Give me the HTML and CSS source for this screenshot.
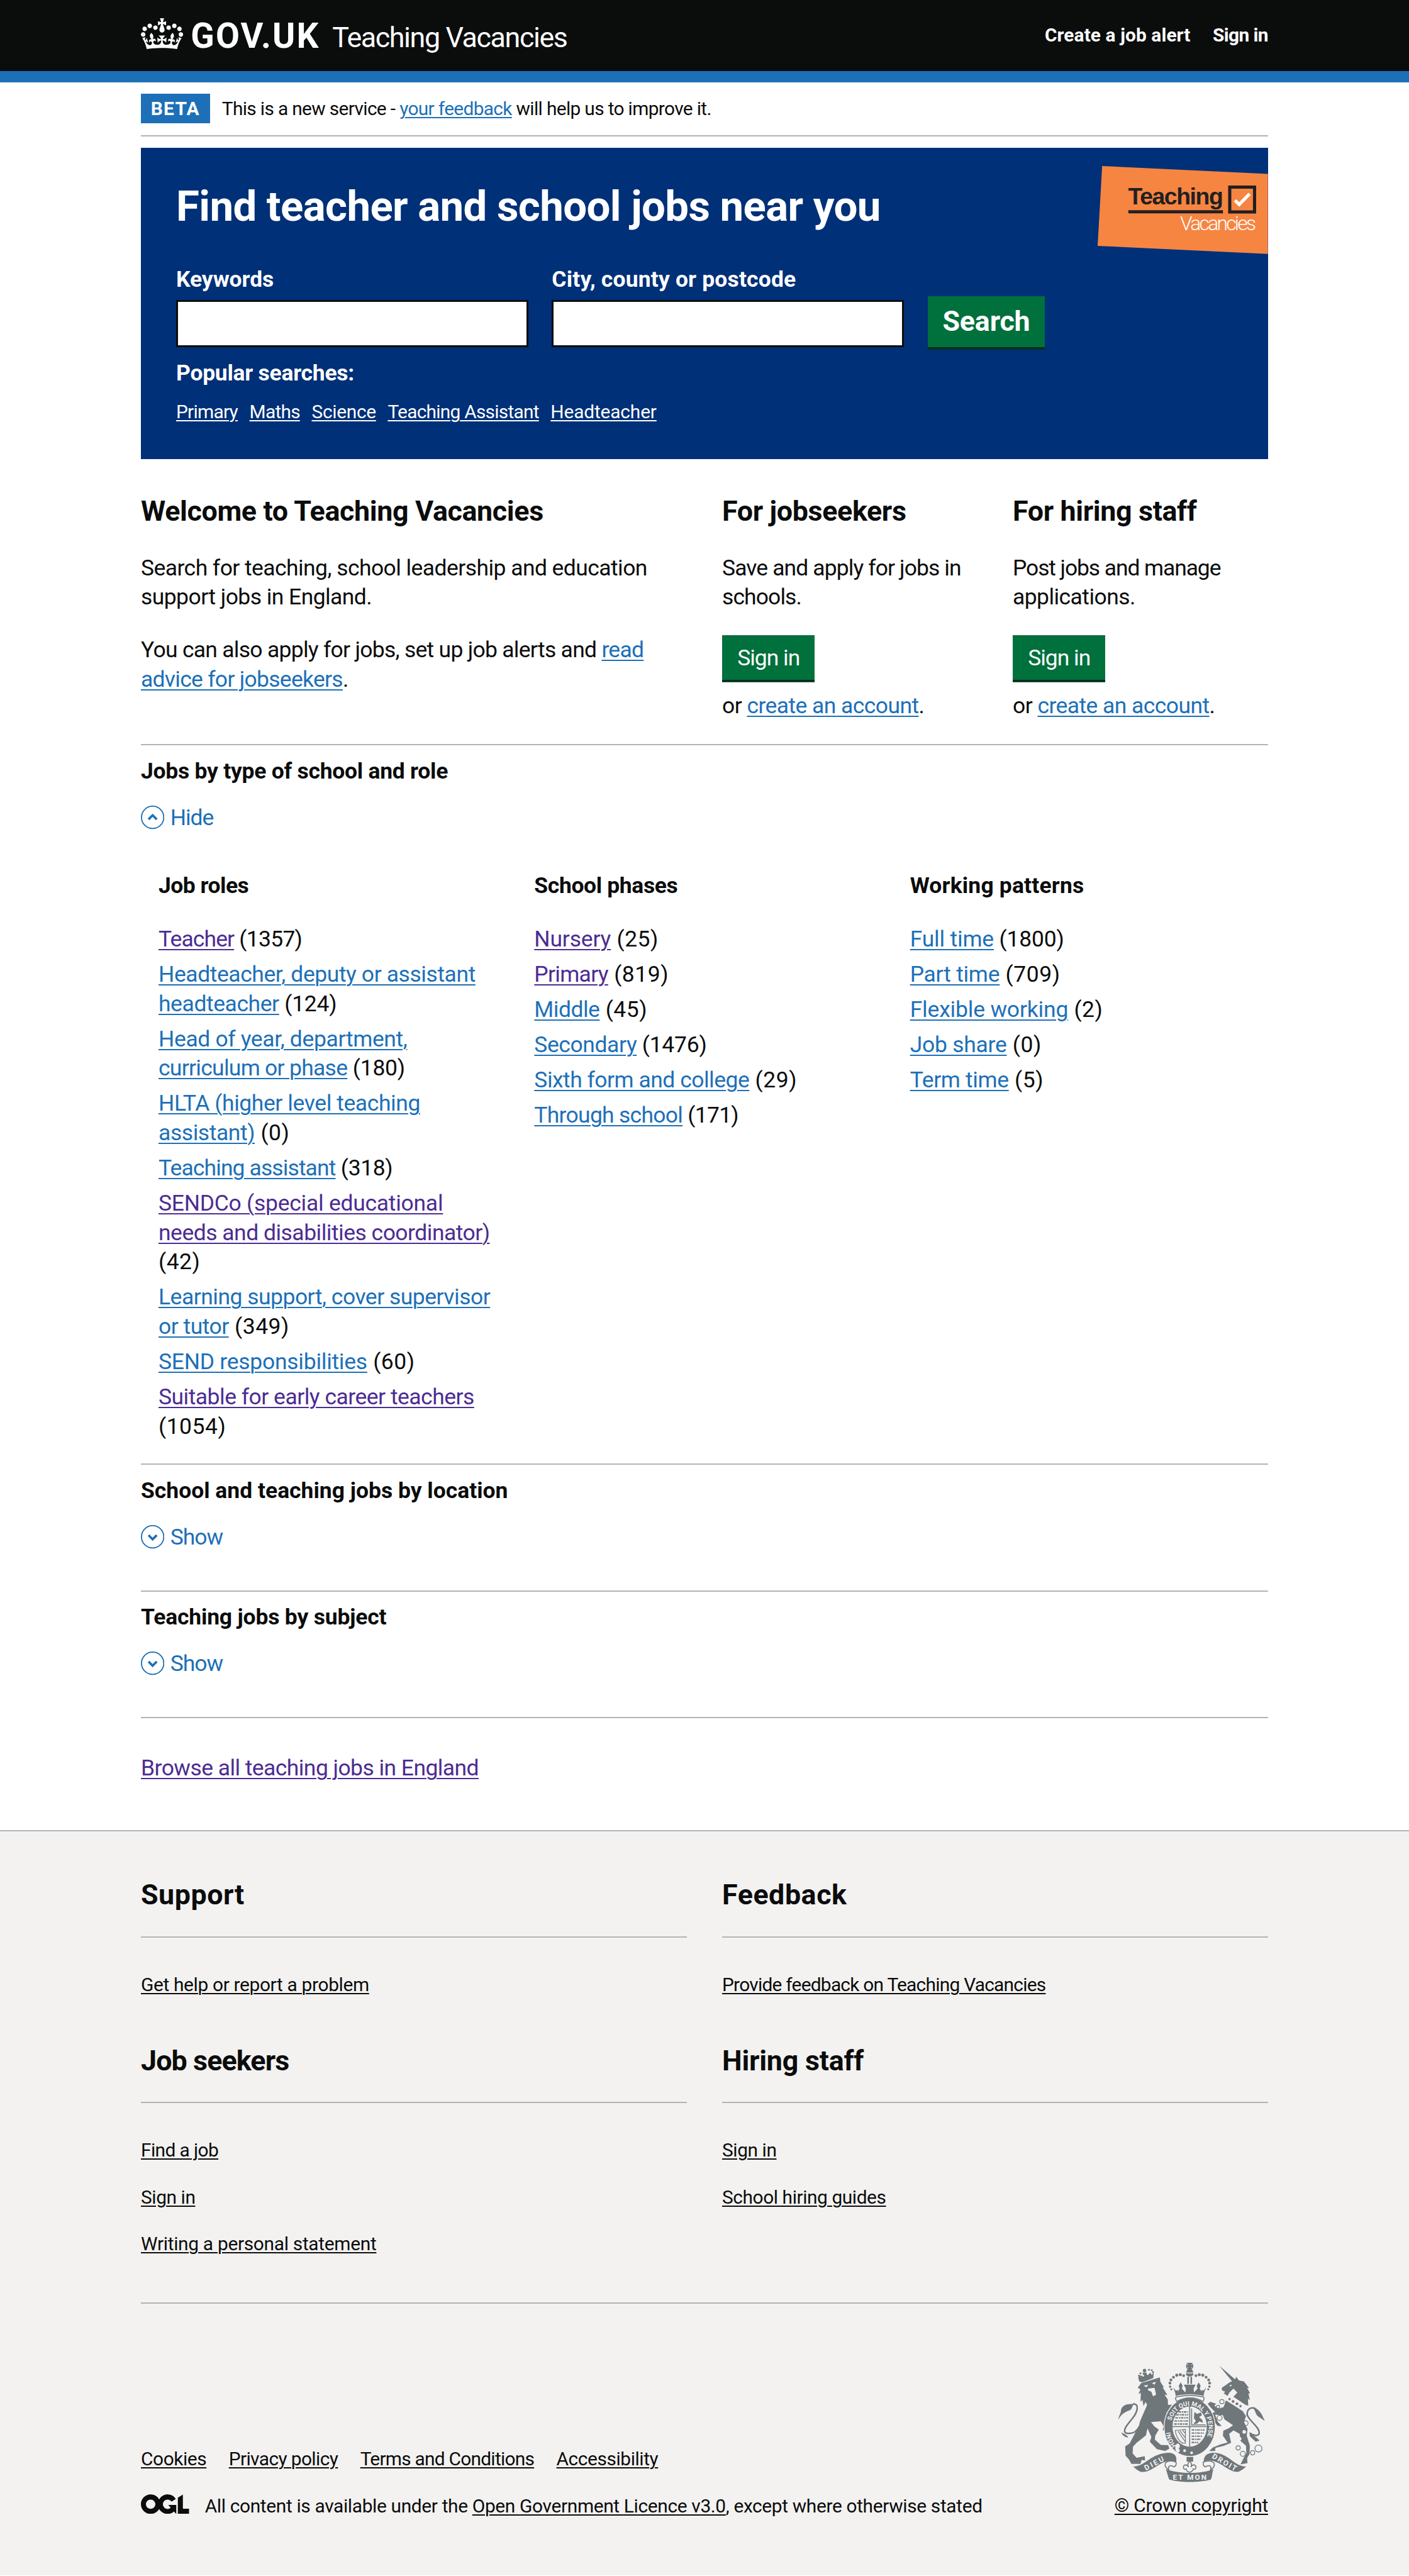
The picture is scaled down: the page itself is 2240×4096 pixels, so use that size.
FILE: index.html
```html
<!DOCTYPE html>
<html lang="en">
<head>
<meta charset="utf-8">
<title>Teaching Vacancies - GOV.UK</title>
<link rel="stylesheet" href="styles.css">
</head>
<body>
<header class="header">
  <div class="container header-row">
    <a class="logo" href="#">
      <svg class="crown" viewBox="0 0 132 97" aria-hidden="true"><path fill="currentColor" fill-rule="evenodd" d="M25 30.2c3.5 1.5 7.7-.2 9.1-3.7 1.5-3.6-.2-7.8-3.9-9.2-3.6-1.4-7.6.3-9.1 3.9-1.4 3.5.3 7.5 3.9 9zM9 39.5c3.6 1.5 7.8-.2 9.2-3.7 1.5-3.6-.2-7.8-3.9-9.1-3.6-1.5-7.6.2-9.1 3.8-1.4 3.5.3 7.5 3.8 9zM4.4 57.2c3.5 1.5 7.7-.2 9.1-3.8 1.5-3.6-.2-7.7-3.9-9.1-3.5-1.5-7.6.3-9.1 3.8-1.4 3.5.3 7.6 3.9 9.1zm38.3-21.4c3.5 1.5 7.7-.2 9.1-3.8 1.5-3.6-.2-7.7-3.9-9.1-3.6-1.5-7.6.3-9.1 3.8-1.3 3.6.4 7.7 3.9 9.1zm64.4-5.6c-3.6 1.5-7.8-.2-9.1-3.7-1.5-3.6.2-7.8 3.8-9.2 3.6-1.4 7.7.3 9.2 3.9 1.3 3.5-.4 7.5-3.9 9zm15.9 9.3c-3.6 1.5-7.7-.2-9.1-3.7-1.5-3.6.2-7.8 3.7-9.1 3.6-1.5 7.7.2 9.2 3.8 1.5 3.5-.3 7.5-3.8 9zm4.7 17.7c-3.6 1.5-7.8-.2-9.2-3.8-1.5-3.6.2-7.7 3.9-9.1 3.6-1.5 7.7.3 9.2 3.8 1.3 3.5-.4 7.6-3.9 9.1zM89.3 35.8c-3.6 1.5-7.8-.2-9.2-3.8-1.4-3.6.2-7.7 3.9-9.1 3.6-1.5 7.7.3 9.2 3.8 1.4 3.6-.3 7.7-3.9 9.1zM69.7 17.7l8.9 4.7V9.3l-8.9 2.8c-.2-.3-.5-.6-.9-.9L72.4 0H59.6l3.5 11.2c-.3.3-.6.5-.9.9l-8.8-2.8v13.1l8.8-4.7c.3.3.6.7.9.9l-5 15.4v.1c-.2.8-.4 1.6-.4 2.4 0 4.1 3.1 7.5 7 8.1h.2c.3 0 .7.1 1 .1.4 0 .7 0 1-.1h.2c4-.6 7.1-4.1 7.1-8.1 0-.8-.1-1.7-.4-2.4V34l-5.1-15.4c.4-.2.7-.6 1-.9zM66 92.8c16.9 0 32.8 1.1 47.1 3.2 4-16.9 8.9-26.7 14-33.5l-9.6-3.4c1 4.9 1.1 7.2 0 10.2-1.5-1.4-3-4.3-4.2-8.7L108.6 76c2.8-2 5-3.2 7.5-3.3-4.4 9.4-10 11.9-13.6 11.2-4.3-.8-6.3-4.6-5.6-7.9 1-4.7 5.7-5.9 8-.5 4.3-8.7-3-11.4-7.6-8.8 7.1-7.2 7.9-13.5 2.1-21.1-8 6.1-8.1 12.3-4.5 20.8-4.7-5.4-12.1-2.5-9.5 6.2 3.4-5.2 7.9-2 7.2 3.1-.6 4.3-6.4 7.8-13.5 7.2-10.3-.9-10.9-8-11.2-13.8 2.5-.5 7.1 1.8 11 7.3L80.2 60c-4.1 4.4-8 5.3-12.3 5.4 1.4-4.4 8-11.6 8-11.6H55.5s6.4 7.2 7.9 11.6c-4.2-.1-8-1-12.3-5.4l1.4 16.4c3.9-5.5 8.5-7.7 10.9-7.3-.3 5.8-.9 12.8-11.1 13.8-7.2.6-12.9-2.9-13.5-7.2-.7-5 3.8-8.3 7.1-3.1 2.7-8.7-4.6-11.6-9.4-6.2 3.7-8.5 3.6-14.7-4.6-20.8-5.8 7.6-5 13.9 2.2 21.1-4.7-2.6-11.9.1-7.7 8.8 2.3-5.5 7.1-4.2 8.1.5.7 3.3-1.3 7.1-5.7 7.9-3.5.7-9-1.8-13.5-11.2 2.5.1 4.7 1.3 7.5 3.3l-4.7-15.4c-1.2 4.4-2.7 7.2-4.3 8.7-1.1-3-.9-5.3 0-10.2l-9.5 3.4c5 6.9 9.9 16.7 14 33.5 14.8-2.1 30.8-3.2 47.7-3.2z"/></svg>
      <span class="logotype">GOV.UK</span>
      <span class="product">Teaching Vacancies</span>
    </a>
    <nav class="header-nav"><a href="#">Create a job alert</a><a class="k20" href="#">Sign in</a></nav>
  </div>
</header>

<div class="container">
  <div class="phase">
    <strong class="tag">BETA</strong>
    <span class="phase-text">This is a new service - <a class="link" href="#">your feedback</a> will help us to improve it.</span>
  </div>

  <main>
    <section class="hero">
      <h1>Find teacher and school jobs near you</h1>
      <svg class="hero-logo" viewBox="1870 283 290 150">
        <path fill="#f68542" d="M1877.7 283 2160 296.3V432.7L1870 419Z"/>
        <text class="mark-teaching" x="1922" y="348.7" textLength="162">Teaching</text>
        <path fill="#231f20" d="M1922.3 358.3h161.2v5.3h-161.2z"/>
        <path fill="none" stroke="#231f20" stroke-width="5.4" d="M2095 319h42.3v42.3H2095z"/>
        <path fill="none" stroke="#fff" stroke-width="5.4" d="m2104 341.5 7.2 7 17.6-18"/>
        <text class="mark-vacancies" x="2010.5" y="392.7" textLength="129.5">Vacancies</text>
      </svg>
      <form class="search">
        <div class="field"><label for="kw">Keywords</label><input id="kw" type="text"></div>
        <div class="field"><label class="wide" for="loc">City, county or postcode</label><input id="loc" type="text"></div>
        <button class="search-btn" type="button">Search</button>
      </form>
      <p class="popular">Popular searches:</p>
      <nav class="popular-links"><a class="k25" href="#">Primary</a><a class="k25" href="#">Maths</a><a class="k10" href="#">Science</a><a class="k25" href="#">Teaching Assistant</a><a class="k5" href="#">Headteacher</a></nav>
    </section>

    <section class="intro">
      <div>
        <h2>Welcome to Teaching Vacancies</h2>
        <p>Search for teaching, school leadership and education<br>support jobs in England.</p>
        <p class="k20">You can also apply for jobs, set up job alerts and <a class="link" href="#">read<br>advice for jobseekers</a>.</p>
      </div>
      <div>
        <h2>For jobseekers</h2>
        <p class="k25">Save and apply for jobs in<br>schools.</p>
        <a class="btn" href="#">Sign in</a>
        <p class="or">or <a class="link" href="#">create an account</a>.</p>
      </div>
      <div>
        <h2>For hiring staff</h2>
        <p><span class="k30">Post jobs and manage</span><br>applications.</p>
        <a class="btn" href="#">Sign in</a>
        <p class="or">or <a class="link" href="#">create an account</a>.</p>
      </div>
    </section>

    <section class="acc">
      <h3 class="k7">Jobs by type of school and role</h3>
      <button class="toggle" type="button"><svg class="chev" viewBox="0 0 20 20"><circle cx="10" cy="10" r="9.5"/><path d="m6.5 11.7 3.5-3.5 3.5 3.5"/></svg>Hide</button>
      <div class="facets">
        <div>
          <h4 class="k15">Job roles</h4>
          <ul>
            <li class="k20"><a class="link visited k25" href="#">Teacher</a> (1357)</li>
            <li class="k7"><a class="link k12" href="#">Headteacher, deputy or assistant<br>headteacher</a> (124)</li>
            <li class="k7"><a class="link k20" href="#"><span class="k10">Head of year, department,</span><br>curriculum or phase</a> (180)</li>
            <li><a class="link k12" href="#">HLTA (higher level teaching<br>assistant)</a> (0)</li>
            <li class="k10"><a class="link k25" href="#">Teaching assistant</a> (318)</li>
            <li><a class="link visited" href="#"><span class="k7">SENDCo (special educational</span><br><span class="k15">needs and disabilities coordinator)</span></a><br>(42)</li>
            <li><a class="link k15" href="#">Learning support, cover supervisor<br>or tutor</a> (349)</li>
            <li><a class="link k7" href="#">SEND responsibilities</a> (60)</li>
            <li><a class="link visited k15" href="#">Suitable for early career teachers</a><br>(1054)</li>
          </ul>
        </div>
        <div>
          <h4 class="k10">School phases</h4>
          <ul>
            <li><a class="link visited k5" href="#">Nursery</a> (25)</li>
            <li><a class="link visited k20" href="#">Primary</a> (819)</li>
            <li><a class="link k15" href="#">Middle</a> (45)</li>
            <li class="k7"><a class="link k12" href="#">Secondary</a> (1476)</li>
            <li><a class="link k15" href="#">Sixth form and college</a> (29)</li>
            <li class="k20"><a class="link k20" href="#">Through school</a> (171)</li>
          </ul>
        </div>
        <div>
          <h4 class="wide">Working patterns</h4>
          <ul>
            <li class="k5"><a class="link k5" href="#">Full time</a> (1800)</li>
            <li><a class="link k7" href="#">Part time</a> (709)</li>
            <li><a class="link k5" href="#">Flexible working</a> (2)</li>
            <li><a class="link k7" href="#">Job share</a> (0)</li>
            <li><a class="link k10" href="#">Term time</a> (5)</li>
          </ul>
        </div>
      </div>
    </section>
    <section class="acc closed">
      <h3>School and teaching jobs by location</h3>
      <button class="toggle" type="button"><svg class="chev" viewBox="0 0 20 20"><circle cx="10" cy="10" r="9.5"/><path d="m6.5 8.6 3.5 3.5 3.5-3.5"/></svg>Show</button>
    </section>
    <section class="acc closed last">
      <h3 class="k5">Teaching jobs by subject</h3>
      <button class="toggle" type="button"><svg class="chev" viewBox="0 0 20 20"><circle cx="10" cy="10" r="9.5"/><path d="m6.5 8.6 3.5 3.5 3.5-3.5"/></svg>Show</button>
    </section>
    <p class="browse"><a class="link visited" href="#">Browse all teaching jobs in England</a></p>
  </main>
</div>

<footer class="footer">
  <div class="container">
    <div class="footer-nav">
      <div><h2 class="wider">Support</h2><ul><li class="k12"><a href="#">Get help or report a problem</a></li></ul></div>
      <div><h2 class="wider">Feedback</h2><ul><li class="k25"><a href="#">Provide feedback on Teaching Vacancies</a></li></ul></div>
      <div><h2 class="k20">Job seekers</h2><ul><li class="k20"><a href="#">Find a job</a></li><li class="k15"><a href="#">Sign in</a></li><li class="k10"><a href="#">Writing a personal statement</a></li></ul></div>
      <div><h2 class="k5">Hiring staff</h2><ul><li class="k15"><a href="#">Sign in</a></li><li class="k15"><a href="#">School hiring guides</a></li></ul></div>
    </div>
    <div class="footer-meta">
      <div class="meta-left">
        <nav class="meta-links"><a class="k15" href="#">Cookies</a><a class="k20" href="#">Privacy policy</a><a class="k25" href="#">Terms and Conditions</a><a class="k15" href="#">Accessibility</a></nav>
        <div class="licence">
          <svg class="ogl" viewBox="0 0 483.2 195.7" aria-hidden="true"><path fill="currentColor" d="M421.5 142.8V.1l-50.7 32.3v161.1h112.4v-50.7zm-122.3-9.6A47.12 47.12 0 0 1 221 97.8c0-26 21.1-47.1 47.1-47.1 16.7 0 31.4 8.7 39.7 21.8l42.7-27.2A97.63 97.63 0 0 0 268.1 0c-36.5 0-68.3 20.1-85.1 49.7A98 98 0 0 0 97.8 0C43.9 0 0 43.9 0 97.8s43.9 97.8 97.8 97.8c36.5 0 68.3-20.1 85.1-49.7a97.76 97.76 0 0 0 149.6 25.4l19.4 22.2h3v-87.8h-80l24.3 27.5zM97.8 145c-26 0-47.1-21.1-47.1-47.1s21.1-47.1 47.1-47.1 47.1 21.1 47.1 47.1S123.8 145 97.8 145"/></svg>
          <span class="licence-text">All content is available under the <a href="#">Open Government Licence v3.0</a>, except where otherwise stated</span>
        </div>
      </div>
      <div class="copyright">
        <svg class="crest" viewBox="130 133 754 616">
          <defs>
            <path id="arc-main" d="M404 433A98 114 0 1 1 545 569"/>
            <path id="arc-honi" d="M429 560A98 118 0 0 1 398 480"/>
          </defs>
          <g fill="#6f777b" stroke="none">
            <!-- lion -->
            <path d="M250 240 345 211 348 234 366 262 360 262 384 302 369 299 386 324 387 352 407 350 378 396 404 440 409 490 400 480 392 494 384 480 360 482 364 460 350 436 300 440 318 462 340 478 322 508 320 530 350 556 388 558 394 576 372 588 330 578 294 540 302 516 282 472 274 508 226 546 208 566 206 600 226 622 268 614 270 636 252 634 246 654 200 654 186 630 170 612 168 564 190 550 210 512 238 460 244 436 280 352 272 336 262 358 256 326 246 336 248 290 236 296 246 272 232 264Z"/>
            <path d="M234 212 240 232 256 236 312 214 314 184 304 198 296 186 284 200 268 190 262 208 246 200Z"/>
            <path d="M133 428C134 408 148 392 146 380 148 364 166 348 188 348L214 346C202 356 206 372 190 380 168 386 144 402 133 428ZM148 492C160 500 176 504 184 518 170 520 152 508 148 492Z"/>
            <!-- unicorn -->
            <path d="M648 150 732 222 716 232ZM730 222 736 208 750 226 776 232 802 266 792 264 807 292 799 294 806 328 796 320 798 356 784 352 722 310 742 288 722 268 700 290 692 306 672 292 680 284 664 278 662 264 684 250 700 238Z"/>
            <path d="M684 328 770 384 786 410 776 440 794 476 790 510 806 560 804 604 792 624 794 650 758 656 776 620 788 600 786 560 758 536 754 500 722 482 700 500 710 546 670 562 630 572 628 588 598 588 616 570 656 554 692 544 668 510 670 484 700 470 720 456 676 426 668 404 628 402 642 438 662 460 642 460 614 428 604 396 628 388 606 366 590 346 604 336 634 346 624 354 644 372 672 362Z"/>
            <path d="M822 362C856 374 868 398 882 434 862 416 840 412 836 392ZM804 490 856 534 836 540 806 512Z"/>
          </g>
          <g fill="none" stroke="#6f777b" stroke-width="8">
            <path d="M240 462C226 492 200 502 172 496 150 484 184 446 204 422 232 388 242 346 208 346M792 408C790 374 806 362 834 370M792 400C796 430 854 462 854 494 852 516 822 508 806 496"/>
            <g stroke-width="4"><circle cx="663" cy="335" r="11"/><circle cx="651" cy="418" r="13"/><circle cx="785" cy="445" r="12"/><circle cx="746" cy="572" r="11"/><circle cx="770" cy="602" r="13"/><circle cx="820" cy="597" r="11"/><circle cx="850" cy="575" r="18"/><circle cx="643" cy="362" r="8"/></g>
          </g>
          <g fill="#f3f2f1">
            <circle cx="777" cy="490" r="9"/><circle cx="754" cy="525" r="9"/>
            <path d="M262 252 286 250 276 262ZM304 240 326 234 318 248ZM286 268 318 264 326 300 310 308 302 284 284 276ZM700 252l16-4-8 10ZM690 310l90 54-10 16-88-52Z"/>
          </g>
          <g fill="#6f777b"><circle cx="267" cy="176" r="9"/><path d="M258 186h18l4 12h-22z"/>
            <circle cx="238" cy="202" r="5"/><circle cx="246" cy="190" r="5"/><circle cx="290" cy="172" r="5"/><circle cx="304" cy="174" r="5"/><circle cx="310" cy="184" r="5"/>
            <circle cx="702" cy="322" r="6"/><circle cx="720" cy="334" r="7"/><circle cx="740" cy="346" r="7"/><circle cx="758" cy="358" r="6"/></g>
          <!-- garter and shield -->
          <ellipse cx="498" cy="465" rx="131" ry="150" fill="#6f777b" stroke="#f3f2f1" stroke-width="4"/>
          <ellipse cx="498" cy="463" rx="88" ry="103" fill="#f3f2f1"/>
          <path fill="none" stroke="#6f777b" stroke-width="5" d="M498 360v206M410 463h176M508 370v84h72"/>
          <path fill="none" stroke="#6f777b" stroke-width="7" stroke-dasharray="14 4 7 3" d="M440 388h50M428 402h62M424 418h66M420 434h70M418 450h70M508 480h66M508 496h62M508 512h56M508 528h48M508 544h34"/>
          <path fill="#6f777b" d="m522 388 14 10 20-8 4 16-14 8 16 14 4 16-18-8-12 12-20 2 14-16-10-14Z"/>
          <path fill="none" stroke="#6f777b" stroke-width="4" d="M424 482c20 0 34-4 52-4v70h-14c-20-12-34-36-38-66m14 4 36 52m-26-54 26 34m-12-36 12 14"/>
          <path fill="#6f777b" d="M520 572c20-8 36-18 48-36l10 20-30 28z"/>
          <g fill="#f3f2f1"><path d="M436 548c-16 8-16 36 0 48 16-2 12-18 4-22 12-4 10-22-4-26Z"/><circle cx="472" cy="586" r="7"/><circle cx="508" cy="597" r="7"/>
            <text class="motto"><textPath href="#arc-main">SOIT QUI MAL Y PENSE</textPath></text>
            <text class="motto"><textPath href="#arc-honi">HONI</textPath></text></g>
          <!-- crown -->
          <g fill="#6f777b">
            <path d="M482 136h32l-10 14 12-8v22l-12-8 10 14h-32l10-14-12 8v-22l12 8ZM480 186a18 18 0 0 1 36 0ZM478 190h40c0 10-10 16-20 16s-20-6-20-16ZM486 208h8v36h-8zM502 208h8v36h-8zM414 262l12 16 14-2-4 12 10-20-4-14 10-18 10 18-4 14 18 20 2-20-10-20h60l-10 20 2 20 18-20-4-14 10-18 10 18-4 14 10 20-4-12 14 2 12-16c-4 16-12 26-12 44-48-12-96-12-144 0 0-18-8-28-12-44Z"/>
            <g id="beads"><circle cx="398" cy="258" r="6"/><circle cx="397" cy="240" r="7"/><circle cx="402" cy="224" r="7"/><circle cx="415" cy="210" r="7"/><circle cx="432" cy="200" r="8"/><circle cx="450" cy="197" r="8"/><circle cx="467" cy="202" r="7"/><circle cx="404" cy="272" r="5"/></g>
            <use href="#beads" transform="matrix(-1 0 0 1 997 0)"/>
          </g>
          <path fill="#f3f2f1" stroke="#6f777b" stroke-width="5" d="M428 312c46-12 96-12 142 0 4 8 0 14-4 22-44-24-88-24-134 0-6-8-8-14-4-22Z"/>
          <!-- ribbon -->
          <path fill="#6f777b" d="M208 667c60 4 90-70 186-70 34 4 40 24 34 50-8-6-20-8-30-8-60 2-90 60-150 56-16-6-26-16-40-28ZM788 667c-60 4-90-70-170-70-38 2-48 22-48 46 10-6 16-6 30-6 60 2 94 60 146 58 16-6 28-16 42-28ZM376 680c70 26 180 26 244 0-8 20-6 40-14 54-60 16-156 16-212 0-8-14-10-34-18-54Z"/>
          <path fill="#f3f2f1" stroke="#6f777b" stroke-width="5" d="M428 645c-16-10-52-8-56 10-2 14 8 20 20 30-8-22 8-28 24-16 14-2 14-18 12-24ZM568 645c16-10 52-8 56 10 2 14-8 20-20 30 8-22-8-28-24-16-14-2-14-18-12-24Z"/>
          <path fill="#6f777b" d="M482 618h34v24h-34z"/>
          <path fill="#f3f2f1" stroke="#6f777b" stroke-width="5" d="M498 640c12 12 12 20 6 30 8-16 26-14 26 2 0 8-8 12-14 8 0 8-10 16-18 16s-18-8-18-16c-6 4-14 0-14-8 0-16 18-18 26-2-6-10-6-18 6-30Z"/>
          <g fill="#f3f2f1" class="ribbon-text">
            <text transform="translate(274 688) rotate(-28)" textLength="108">DIEU</text>
            <text x="412" y="736" textLength="172">ET MON</text>
            <text transform="translate(610 622) rotate(30)" textLength="138">DROIT</text>
          </g>
        </svg>
        <a href="#">© Crown copyright</a>
      </div>
    </div>
  </div>
</footer>
</body>
</html>
```
FILE: styles.css
```css
/* 1rem stands for ten design pixels. */
html { font-size: 18.66667px; }
* { box-sizing: border-box; }
body { margin: 0; width: 120rem; background: #fff; color: #0b0c0c; font-family: Roboto, "Liberation Sans", sans-serif; font-size: 1.9rem; line-height: 2.5rem; letter-spacing: -.0155em; }
h1, h2, h3, h4, p, ul { margin: 0; padding: 0; }
ul { list-style: none; }
a { color: inherit; text-decoration-thickness: 2px; text-underline-offset: .1em; }
h1, h2, h3, h4, p, li, a, button, label, span { white-space: nowrap; }
.container { width: 96rem; margin: 0 auto; }
.link { color: #1d70b8; }
.visited { color: #4c2c92; }

.header { height: 7rem; background: #0b0c0c; border-bottom: 1rem solid #1d70b8; color: #fff; }
.header-row { display: flex; justify-content: space-between; }
.header a { text-decoration: none; }
.logo { display: flex; align-items: flex-start; }
.crown { width: 3.6rem; height: 2.65rem; margin-top: 1.55rem; }
.logotype { width: 11.1rem; margin: 1.54rem 0 0 .65rem; font-size: 2.95rem; font-weight: 700; line-height: 3rem; letter-spacing: .04em; }
.product { margin: 1.73rem 0 0 .95rem; font-size: 2.4rem; line-height: 3rem; letter-spacing: -.031em; }
.header-nav { display: flex; gap: 1.9rem; padding-top: 2rem; font-size: 1.6rem; font-weight: 700; line-height: 2rem; letter-spacing: .003em; }

.phase { display: flex; align-items: flex-start; gap: 1rem; height: 4.6rem; padding-top: 1rem; border-bottom: 2px solid #b1b4b6; font-size: 1.6rem; line-height: 2rem; }
.tag { height: 2.5rem; width: 5.9rem; padding: .27rem 0 0 .85rem; background: #1d70b8; color: #fff; letter-spacing: .04em; }
.phase-text { padding-top: .25rem; letter-spacing: -.022em; }

.hero { position: relative; height: 26.5rem; margin-top: 1rem; padding: 3rem 3rem 0; background: #003078; color: #fff; }
.hero h1 { font-size: 3.6rem; line-height: 4rem; letter-spacing: -.009em; }
.hero-logo { position: absolute; top: 1.55rem; right: 0; width: 14.5rem; height: 7.5rem; letter-spacing: 0; }
.mark-teaching { font: 700 40px "Liberation Sans", Arial, sans-serif; fill: #231f20; }
.mark-vacancies { font: 300 34px Roboto, sans-serif; fill: #fff; }
.search { display: flex; align-items: flex-end; gap: 2rem; margin-top: 2.96rem; }
.field { display: flex; flex-direction: column; gap: .5rem; }
.field label { font-weight: 700; letter-spacing: -.002em; }
.field input { width: 30rem; height: 4rem; padding: 0; border: .2rem solid #0b0c0c; border-radius: 0; background: #fff; }
.search-btn { width: 10rem; height: 4.3rem; padding: 0; border: 0; background: #00703c; box-shadow: 0 .2rem 0 #002d18; color: #fff; font: 700 2.4rem/1 Roboto, sans-serif; letter-spacing: -.004em; }
.popular { margin-top: .98rem; font-weight: 700; letter-spacing: -.007em; }
.popular-links { display: flex; gap: 1rem; margin-top: 1.03rem; font-size: 1.6rem; line-height: 2rem; }

.intro { display: grid; grid-template-columns: 49.5rem 24.75rem 21.75rem; height: 24.3rem; padding-top: 2.98rem; }
.intro h2, .footer h2 { font-size: 2.4rem; line-height: 3rem; }
.intro h2 { margin-bottom: 2.04rem; letter-spacing: -.008em; }
.intro p + p { margin-top: 2rem; }
.btn { display: block; width: 7.9rem; height: 3.8rem; margin: 1.98rem 0 1rem; padding-top: .68rem; background: #00703c; box-shadow: 0 .2rem 0 #002d18; color: #fff; text-align: center; text-decoration: none; letter-spacing: -.028em; }

.acc { height: 61.28rem; border-top: 2px solid #b1b4b6; padding-top: .95rem; }
.acc h3, .acc h4 { font-size: 1.9rem; line-height: 2.5rem; }
.acc h3 { letter-spacing: 0; }
.closed { height: 10.78rem; }
.last { height: 10.89rem; border-bottom: 2px solid #b1b4b6; }
.toggle { display: flex; gap: .5rem; margin-top: 1.47rem; padding: 0; border: 0; background: none; color: #1d70b8; font: 400 1.9rem/2.5rem Roboto, sans-serif; letter-spacing: -.028em; }
.chev { width: 2rem; height: 2rem; margin-top: .22rem; fill: none; stroke: currentColor; stroke-width: 1; }
.chev path { stroke-width: 2; }
.facets { display: grid; grid-template-columns: repeat(3, 32rem); padding: 3.26rem 0 0 1.5rem; }
.facets ul { margin-top: 2.06rem; }
.facets li { margin-bottom: .5rem; letter-spacing: .015em; }
.browse { margin: 3.03rem 0 4rem; }

.footer { height: 63.52rem; border-top: 2px solid #b1b4b6; background: #f3f2f1; padding-top: 3.95rem; font-size: 1.6rem; line-height: 2rem; }
.footer-nav { display: grid; grid-template-columns: 46.5rem 46.5rem; gap: 4rem 3rem; padding-bottom: 4rem; border-bottom: 2px solid #b1b4b6; }
.footer-nav h2 { padding-bottom: 2.02rem; border-bottom: 2px solid #b1b4b6; margin-bottom: 2.98rem; }
.footer-nav li + li { margin-top: 2rem; }
.footer-meta { display: flex; justify-content: space-between; padding-top: 4.95rem; }
.meta-left { display: flex; flex-direction: column; gap: 2rem; padding-top: 7.25rem; }
.meta-links { display: flex; gap: 1.9rem; }
.licence { display: flex; gap: 1.35rem; }
.licence-text { letter-spacing: -.0115em; }
.ogl { width: 4.1rem; height: 1.7rem; }
.copyright { display: flex; flex-direction: column; align-items: flex-end; gap: .95rem; letter-spacing: -.006em; }
.crest { width: 12.55rem; height: 10.25rem; margin-right: .25rem; letter-spacing: 0; }
.motto { font: 700 32px Roboto, sans-serif; }
.ribbon-text { font: 700 38px Roboto, sans-serif; }

/* Tracking, in thousandths of an em. */
.k5 { letter-spacing: -.005em !important; }
.k7 { letter-spacing: -.007em !important; }
.k10 { letter-spacing: -.01em !important; }
.k12 { letter-spacing: -.0115em !important; }
.k15 { letter-spacing: -.014em !important; }
.k20 { letter-spacing: -.02em !important; }
.k25 { letter-spacing: -.025em !important; }
.k30 { letter-spacing: -.031em !important; }
.wide { letter-spacing: .005em !important; }
.wider { letter-spacing: .012em !important; }
```
